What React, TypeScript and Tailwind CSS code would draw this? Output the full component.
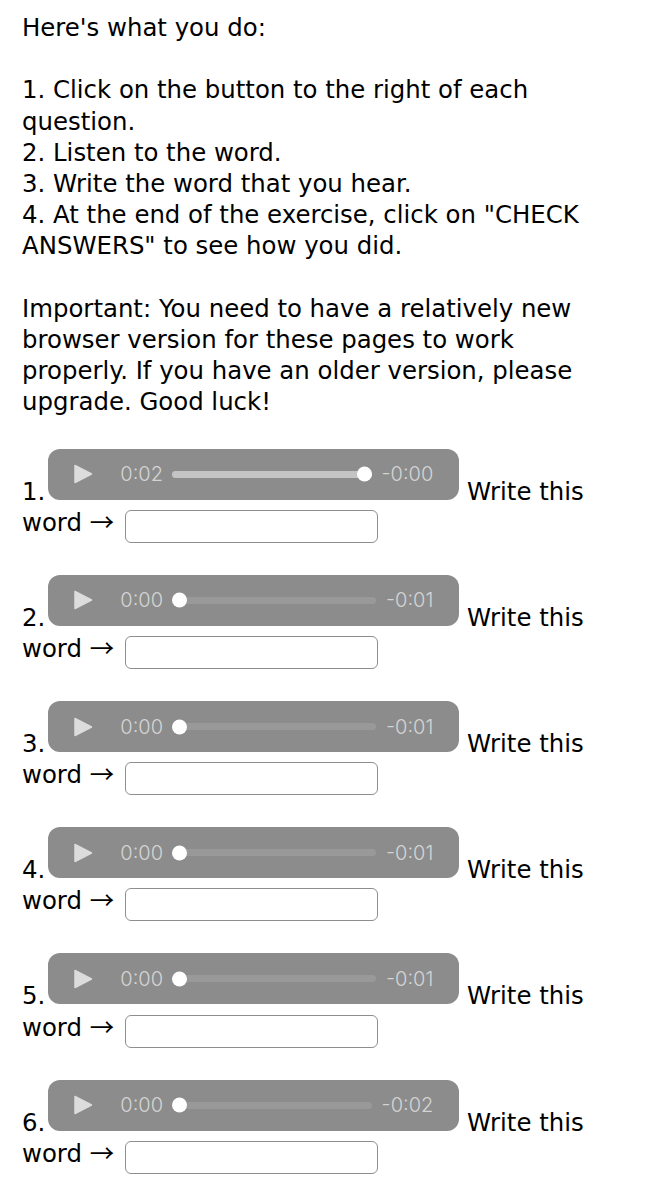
import React from 'react';

interface Question {
  n: number;
  current: string;
  remaining: string;
  done: boolean;
}

const questions: Question[] = [
  { n: 1, current: '0:02', remaining: '-0:00', done: true },
  { n: 2, current: '0:00', remaining: '-0:01', done: false },
  { n: 3, current: '0:00', remaining: '-0:01', done: false },
  { n: 4, current: '0:00', remaining: '-0:01', done: false },
  { n: 5, current: '0:00', remaining: '-0:01', done: false },
  { n: 6, current: '0:00', remaining: '-0:02', done: false },
];

// Grey pill-shaped media control, sits on the text baseline like a native <audio>
const AudioBar: React.FC<{ current: string; remaining: string; done: boolean }> = ({
  current,
  remaining,
  done,
}) => (
  <span className="inline-block overflow-hidden align-baseline ml-[3px]">
    <span className="flex items-center w-[411px] h-[51px] rounded-[12px] bg-[#8c8c8c] pl-[25px] pr-[26px] font-['Inter',sans-serif] font-light text-[20px] leading-none text-[#d4d4d4]">
      <svg width="20" height="20" viewBox="0 0 20 20" className="shrink-0">
        <path d="M2 1.5 L18.5 10 L2 18.5 Z" fill="#dcdcdc" strokeLinejoin="round" stroke="#dcdcdc" strokeWidth="1.5" />
      </svg>
      <span className="ml-[27px] w-[42px] shrink-0">{current}</span>
      <span className="relative ml-[10px] flex-1 h-[7px] rounded-full bg-[#999999]">
        {done ? (
          <>
            <span className="absolute inset-0 rounded-full bg-[#c4c4c4]" />
            <span className="absolute right-0 top-1/2 -translate-y-1/2 w-[15px] h-[15px] rounded-full bg-white" />
          </>
        ) : (
          <span className="absolute left-0 top-1/2 -translate-y-1/2 w-[15px] h-[15px] rounded-full bg-white" />
        )}
      </span>
      <span className="ml-[10px] shrink-0">{remaining}</span>
    </span>
  </span>
);

export default function App() {
  return (
    <div className="bg-white text-black px-[22px] pt-[12px] pb-[40px] font-['DejaVu_Sans',sans-serif] text-[24.4px] leading-[31.2px]">
      <p>
        Here's what you do:
        <br />
        <br />
        1. Click on the button to the right of each question.
        <br />
        2. Listen to the word.
        <br />
        3. Write the word that you hear.
        <br />
        4. At the end of the exercise, click on "CHECK ANSWERS" to see how you did.
        <br />
        <br />
        Important: You need to have a relatively new browser version for these pages to work
        properly. If you have an older version, please upgrade. Good luck!
      </p>

      <div className="mt-[31px]">
        {questions.map((q) => (
          <div key={q.n} className="mb-[32px]">
            {q.n}.
            <AudioBar current={q.current} remaining={q.remaining} done={q.done} /> Write this
            word <span className="font-['Noto_Sans_CJK_SC',sans-serif] leading-none">→</span>{' '}
            <span className="inline-block overflow-hidden align-[-12px] ml-[3px]">
              <input
                type="text"
                className="block w-[253px] h-[33px] rounded-[6px] border border-[#8e8e8e] bg-white"
              />
            </span>
          </div>
        ))}
      </div>
    </div>
  );
}
